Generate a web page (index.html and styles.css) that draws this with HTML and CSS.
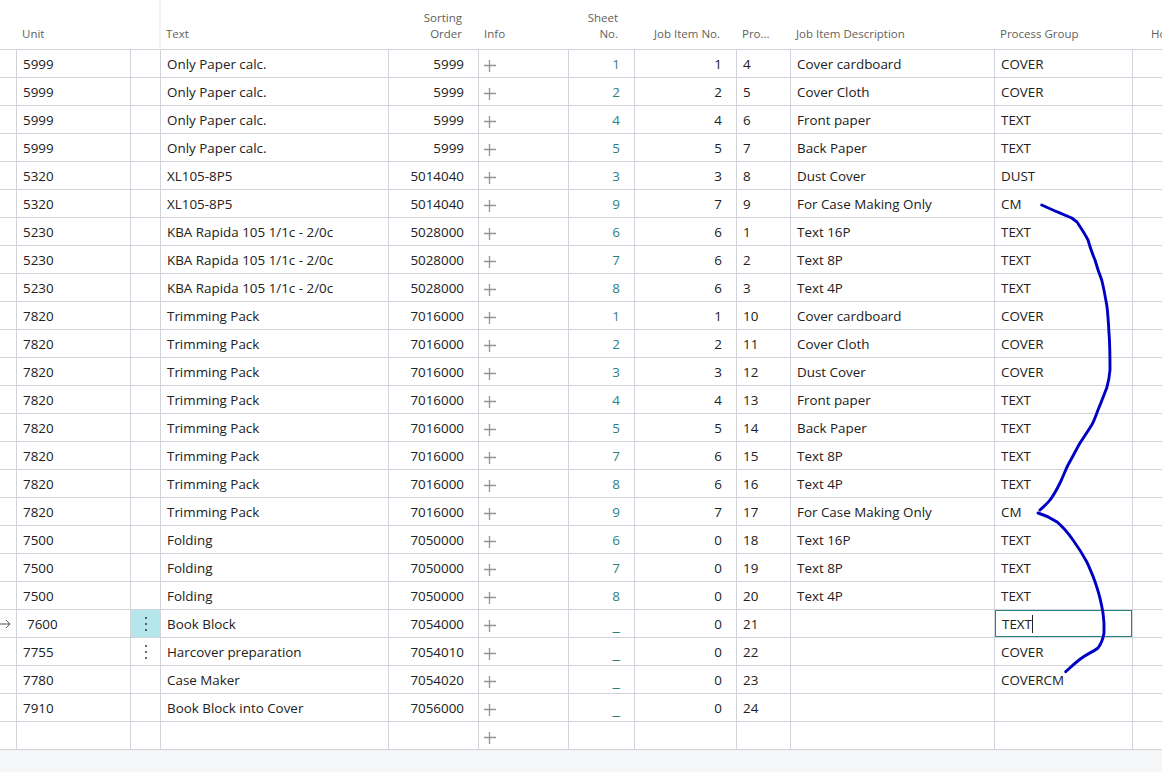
FILE: index.html
```html
<!DOCTYPE html>
<html lang="en">
<head>
<meta charset="utf-8">
<title>Job items</title>
<link rel="stylesheet" href="styles.css">
</head>
<body>
<svg class="defs" width="0" height="0" aria-hidden="true">
  <symbol id="plus" viewBox="0 0 12 12"><path d="M5.5 0V12M0 5.5H12" fill="none" stroke="#939393" stroke-width="1.3"/></symbol>
  <symbol id="dots" viewBox="0 0 4 16"><circle cx="2" cy="2" r="1" fill="#333"/><circle cx="2" cy="8" r="1" fill="#333"/><circle cx="2" cy="14" r="1" fill="#333"/></symbol>
</svg>
<div class="page">
<main class="grid-wrap">
<table class="grid">
  <colgroup>
    <col class="c-mark"><col class="c-unit"><col class="c-menu"><col class="c-text"><col class="c-sort"><col class="c-info"><col class="c-sheet"><col class="c-job"><col class="c-pro"><col class="c-desc"><col class="c-group"><col class="c-last">
  </colgroup>
  <thead>
    <tr>
      <th></th><th>Unit</th><th class="sep"></th><th>Text</th><th class="r">Sorting<br>Order</th><th>Info</th><th class="r sheet-h">Sheet<br>No.</th><th class="r">Job Item No.</th><th>Pro...</th><th>Job Item Description</th><th>Process Group</th><th class="last-h">Ho</th>
    </tr>
  </thead>
  <tbody>
    <tr><td></td><td>5999</td><td></td><td>Only Paper calc.</td><td class="r">5999</td><td class="i"><svg class="plus"><use href="#plus"/></svg></td><td class="r no">1</td><td class="r">1</td><td>4</td><td>Cover cardboard</td><td>COVER</td><td></td></tr>
    <tr><td></td><td>5999</td><td></td><td>Only Paper calc.</td><td class="r">5999</td><td class="i"><svg class="plus"><use href="#plus"/></svg></td><td class="r no">2</td><td class="r">2</td><td>5</td><td>Cover Cloth</td><td>COVER</td><td></td></tr>
    <tr><td></td><td>5999</td><td></td><td>Only Paper calc.</td><td class="r">5999</td><td class="i"><svg class="plus"><use href="#plus"/></svg></td><td class="r no">4</td><td class="r">4</td><td>6</td><td>Front paper</td><td>TEXT</td><td></td></tr>
    <tr><td></td><td>5999</td><td></td><td>Only Paper calc.</td><td class="r">5999</td><td class="i"><svg class="plus"><use href="#plus"/></svg></td><td class="r no">5</td><td class="r">5</td><td>7</td><td>Back Paper</td><td>TEXT</td><td></td></tr>
    <tr><td></td><td>5320</td><td></td><td>XL105-8P5</td><td class="r">5014040</td><td class="i"><svg class="plus"><use href="#plus"/></svg></td><td class="r no">3</td><td class="r">3</td><td>8</td><td>Dust Cover</td><td>DUST</td><td></td></tr>
    <tr><td></td><td>5320</td><td></td><td>XL105-8P5</td><td class="r">5014040</td><td class="i"><svg class="plus"><use href="#plus"/></svg></td><td class="r no">9</td><td class="r">7</td><td>9</td><td>For Case Making Only</td><td>CM</td><td></td></tr>
    <tr><td></td><td>5230</td><td></td><td>KBA Rapida 105 1/1c - 2/0c</td><td class="r">5028000</td><td class="i"><svg class="plus"><use href="#plus"/></svg></td><td class="r no">6</td><td class="r">6</td><td>1</td><td>Text 16P</td><td>TEXT</td><td></td></tr>
    <tr><td></td><td>5230</td><td></td><td>KBA Rapida 105 1/1c - 2/0c</td><td class="r">5028000</td><td class="i"><svg class="plus"><use href="#plus"/></svg></td><td class="r no">7</td><td class="r">6</td><td>2</td><td>Text 8P</td><td>TEXT</td><td></td></tr>
    <tr><td></td><td>5230</td><td></td><td>KBA Rapida 105 1/1c - 2/0c</td><td class="r">5028000</td><td class="i"><svg class="plus"><use href="#plus"/></svg></td><td class="r no">8</td><td class="r">6</td><td>3</td><td>Text 4P</td><td>TEXT</td><td></td></tr>
    <tr><td></td><td>7820</td><td></td><td>Trimming Pack</td><td class="r">7016000</td><td class="i"><svg class="plus"><use href="#plus"/></svg></td><td class="r no">1</td><td class="r">1</td><td>10</td><td>Cover cardboard</td><td>COVER</td><td></td></tr>
    <tr><td></td><td>7820</td><td></td><td>Trimming Pack</td><td class="r">7016000</td><td class="i"><svg class="plus"><use href="#plus"/></svg></td><td class="r no">2</td><td class="r">2</td><td>11</td><td>Cover Cloth</td><td>COVER</td><td></td></tr>
    <tr><td></td><td>7820</td><td></td><td>Trimming Pack</td><td class="r">7016000</td><td class="i"><svg class="plus"><use href="#plus"/></svg></td><td class="r no">3</td><td class="r">3</td><td>12</td><td>Dust Cover</td><td>COVER</td><td></td></tr>
    <tr><td></td><td>7820</td><td></td><td>Trimming Pack</td><td class="r">7016000</td><td class="i"><svg class="plus"><use href="#plus"/></svg></td><td class="r no">4</td><td class="r">4</td><td>13</td><td>Front paper</td><td>TEXT</td><td></td></tr>
    <tr><td></td><td>7820</td><td></td><td>Trimming Pack</td><td class="r">7016000</td><td class="i"><svg class="plus"><use href="#plus"/></svg></td><td class="r no">5</td><td class="r">5</td><td>14</td><td>Back Paper</td><td>TEXT</td><td></td></tr>
    <tr><td></td><td>7820</td><td></td><td>Trimming Pack</td><td class="r">7016000</td><td class="i"><svg class="plus"><use href="#plus"/></svg></td><td class="r no">7</td><td class="r">6</td><td>15</td><td>Text 8P</td><td>TEXT</td><td></td></tr>
    <tr><td></td><td>7820</td><td></td><td>Trimming Pack</td><td class="r">7016000</td><td class="i"><svg class="plus"><use href="#plus"/></svg></td><td class="r no">8</td><td class="r">6</td><td>16</td><td>Text 4P</td><td>TEXT</td><td></td></tr>
    <tr><td></td><td>7820</td><td></td><td>Trimming Pack</td><td class="r">7016000</td><td class="i"><svg class="plus"><use href="#plus"/></svg></td><td class="r no">9</td><td class="r">7</td><td>17</td><td>For Case Making Only</td><td>CM</td><td></td></tr>
    <tr><td></td><td>7500</td><td></td><td>Folding</td><td class="r">7050000</td><td class="i"><svg class="plus"><use href="#plus"/></svg></td><td class="r no">6</td><td class="r">0</td><td>18</td><td>Text 16P</td><td>TEXT</td><td></td></tr>
    <tr><td></td><td>7500</td><td></td><td>Folding</td><td class="r">7050000</td><td class="i"><svg class="plus"><use href="#plus"/></svg></td><td class="r no">7</td><td class="r">0</td><td>19</td><td>Text 8P</td><td>TEXT</td><td></td></tr>
    <tr><td></td><td>7500</td><td></td><td>Folding</td><td class="r">7050000</td><td class="i"><svg class="plus"><use href="#plus"/></svg></td><td class="r no">8</td><td class="r">0</td><td>20</td><td>Text 4P</td><td>TEXT</td><td></td></tr>
    <tr><td class="mark"><svg class="arrow" viewBox="0 0 11 10"><path d="M0 5H10M6 1L10 5L6 9" fill="none" stroke="#555" stroke-width="1"/></svg></td><td class="unit-active">7600</td><td class="menu active"><svg class="dots"><use href="#dots"/></svg></td><td>Book Block</td><td class="r">7054000</td><td class="i"><svg class="plus"><use href="#plus"/></svg></td><td class="r no dash">_</td><td class="r">0</td><td>21</td><td></td><td class="edit-cell"><div class="edit">TEXT<span class="caret"></span></div></td><td></td></tr>
    <tr><td></td><td>7755</td><td class="menu"><svg class="dots"><use href="#dots"/></svg></td><td>Harcover preparation</td><td class="r">7054010</td><td class="i"><svg class="plus"><use href="#plus"/></svg></td><td class="r no dash">_</td><td class="r">0</td><td>22</td><td></td><td>COVER</td><td></td></tr>
    <tr><td></td><td>7780</td><td></td><td>Case Maker</td><td class="r">7054020</td><td class="i"><svg class="plus"><use href="#plus"/></svg></td><td class="r no dash">_</td><td class="r">0</td><td>23</td><td></td><td>COVERCM</td><td></td></tr>
    <tr><td></td><td>7910</td><td></td><td>Book Block into Cover</td><td class="r">7056000</td><td class="i"><svg class="plus"><use href="#plus"/></svg></td><td class="r no dash">_</td><td class="r">0</td><td>24</td><td></td><td></td><td></td></tr>
    <tr><td></td><td></td><td></td><td></td><td></td><td class="i"><svg class="plus"><use href="#plus"/></svg></td><td></td><td></td><td></td><td></td><td></td><td></td></tr>
  </tbody>
</table>
<svg class="ink" viewBox="0 0 1162 772" aria-hidden="true">
  <path d="M1041.7 205L1056.7 211.7L1071.7 218L1077 222C1081 228 1085 234 1088 240C1090 247 1092 253 1095 260C1097 267 1099 273 1101.7 280C1104 289 1105.5 298 1107 306.7C1108 315 1108.5 324 1109 333C1110 345 1110 358 1110 370C1109.5 376 1108.5 382 1106.7 388C1104 395 1101 403 1098 410C1096 415 1094.5 420 1091.7 425C1088 431 1084 437 1080 443C1076 450 1072 458 1068 465C1065 471 1063 477 1060 483C1057 489 1054 495 1050 500C1047 504 1043 507 1040 510"/>
  <path d="M1038 513C1045 515 1051 518 1056.7 521.7C1063 527 1068 533 1073 540C1078 547 1082.5 554 1086.7 561.7C1090.5 570 1094 578 1096.7 586.7C1099.5 595 1101.5 604 1103 613C1104 620 1104.3 627 1104 633C1103 639 1101 644 1098 648C1093 652 1087 654 1081.7 658C1076 662 1071 667 1065.7 671.7"/>
</svg>
</main>
<footer class="foot"></footer>
</div>
</body>
</html>
```
FILE: styles.css
```css
* { box-sizing: border-box; }
html, body { margin: 0; padding: 0; height: 100%; overflow: hidden; }
body { font-family: "Open Sans", "Noto Sans", "Liberation Sans", sans-serif; color: #212121; background: #fff; }
.defs { position: absolute; }
.page { display: flex; flex-direction: column; height: 772px; width: 1162px; overflow: hidden; }
.grid-wrap { position: relative; flex: 0 0 750px; height: 750px; overflow: hidden; }
.foot { flex: 1; background: #f5f6f8; }

.grid { border-collapse: separate; border-spacing: 0; table-layout: fixed; width: 1192px; font-size: 13.4px; }
.c-mark { width: 17px; }
.c-unit { width: 114px; }
.c-menu { width: 30px; }
.c-text { width: 228px; }
.c-sort { width: 90px; }
.c-info { width: 90px; }
.c-sheet { width: 66px; }
.c-job { width: 102px; }
.c-pro { width: 54px; }
.c-desc { width: 204px; }
.c-group { width: 138px; }
.c-last { width: 59px; }

th { height: 50px; padding: 0 5px 7px; font-size: 11.5px; line-height: 16px; font-weight: 400; color: #615f5d; text-align: left; vertical-align: bottom; border-bottom: 1px solid #d0d3da; white-space: nowrap; overflow: hidden; }
th.r { text-align: right; padding-right: 17px; }
th.sep { border-right: 2px solid #f3f3f3; }
th.last-h { padding-left: 18px; }

td { height: 28px; padding: 2px 6px 0; border-right: 1px solid #d0d3da; border-bottom: 1px solid #d0d3da; white-space: nowrap; overflow: hidden; line-height: 25px; }
td.r { text-align: right; padding-right: 14px; }
td.no { color: #2b8287; }
td.dash { font-size: 17px; }
td.i { padding: 0 5px; vertical-align: top; }
td:last-child { border-right: 0; }

.plus { display: block; width: 12px; height: 12px; margin-top: 10px; }
.mark { padding: 0; vertical-align: middle; }
.arrow { display: block; width: 11px; height: 10px; }
.unit-active { padding-left: 10px; }
.menu { padding: 0; text-align: center; vertical-align: middle; }
.menu.active { background: #b5e6ea; }
.dots { display: block; width: 4px; height: 16px; margin: 0 auto; }
.edit-cell { padding: 0; }
.edit { display: flex; align-items: center; height: 27px; width: 137px; padding: 1px 0 0 6px; border: 1px solid #2b8287; }
.caret { display: block; width: 1px; height: 18px; background: #222; }

.ink { position: absolute; left: 0; top: 0; width: 1162px; height: 772px; pointer-events: none; }
.ink path { fill: none; stroke: #0000c4; stroke-width: 2.9; stroke-linecap: round; stroke-linejoin: round; }
```
